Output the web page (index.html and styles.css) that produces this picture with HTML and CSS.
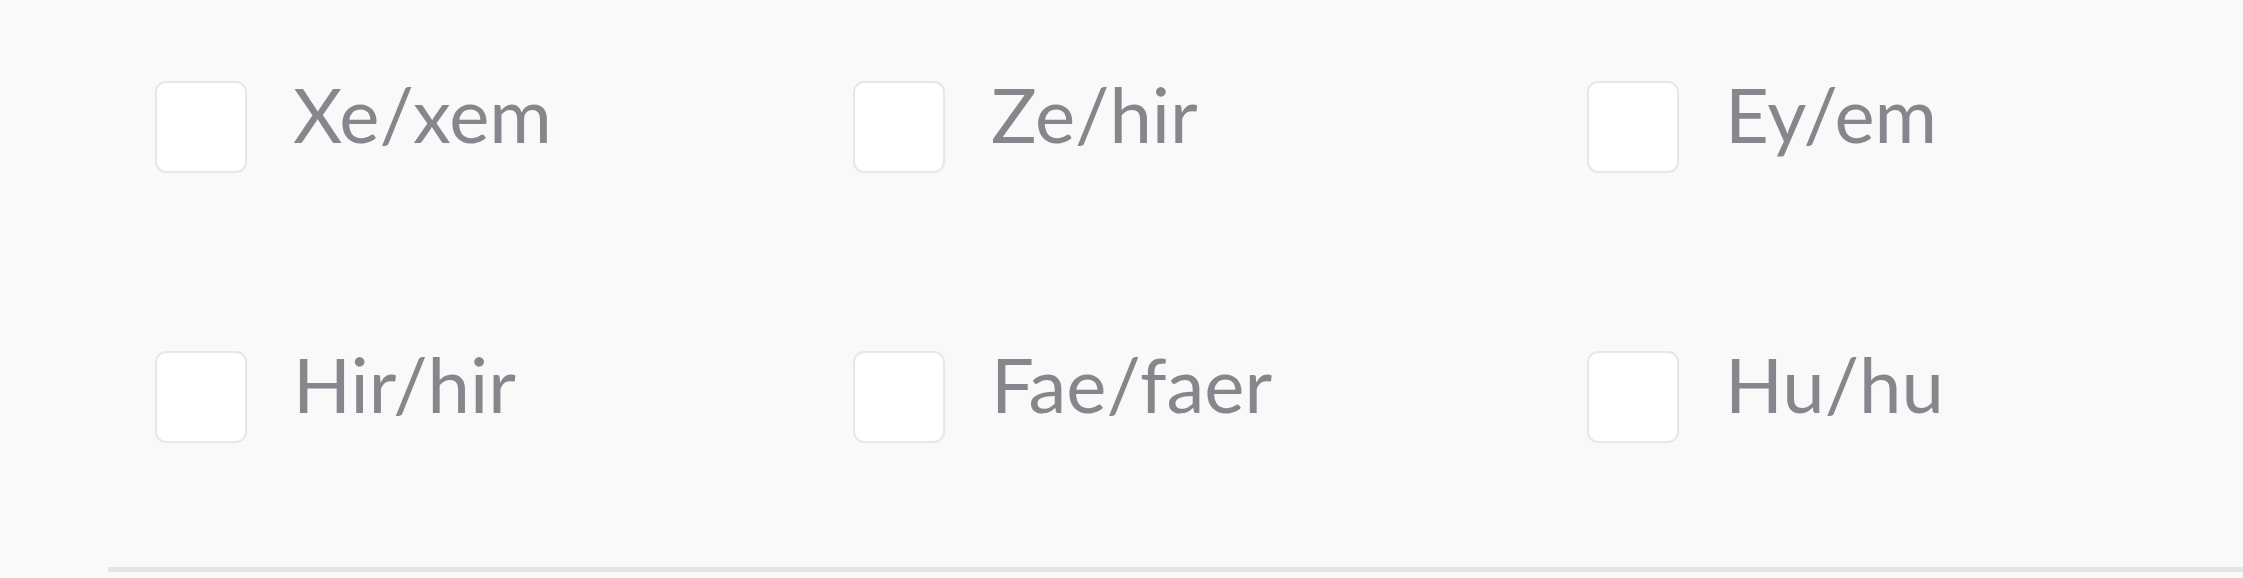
FILE: index.html
```html
<!DOCTYPE html>
<html lang="en">
<head>
<meta charset="utf-8">
<title>Pronouns</title>
<link rel="stylesheet" href="styles.css">
</head>
<body>
<div class="section">
  <div class="options">
    <label class="option"><span class="box"></span><span class="text">Xe/xem</span></label>
    <label class="option"><span class="box"></span><span class="text">Ze/hir</span></label>
    <label class="option"><span class="box"></span><span class="text">Ey/em</span></label>
    <label class="option"><span class="box"></span><span class="text">Hir/hir</span></label>
    <label class="option"><span class="box"></span><span class="text">Fae/faer</span></label>
    <label class="option"><span class="box"></span><span class="text">Hu/hu</span></label>
  </div>
</div>
</body>
</html>
```
FILE: styles.css
```css
html, body {
  margin: 0;
  padding: 0;
  background: #f9f9f9;
}
body {
  width: 2243px;
  height: 578px;
  overflow: hidden;
  font-family: "Lato", "Liberation Sans", sans-serif;
}
.section {
  margin-left: 108px;
  padding: 68px 0 124px 47px;
  border-bottom: 5px solid #e4e5e7;
}
.options {
  display: grid;
  grid-template-columns: 698px 734px 1fr;
  row-gap: 165px;
}
.option {
  display: flex;
  align-items: flex-start;
}
.box {
  box-sizing: border-box;
  width: 92px;
  height: 92px;
  margin-top: 13px;
  background: #ffffff;
  border: 2px solid #e7e7e7;
  border-radius: 11px;
  flex: none;
}
.text {
  margin-left: 46px;
  font-size: 76px;
  line-height: 91px;
  color: #86878c;
}
```
